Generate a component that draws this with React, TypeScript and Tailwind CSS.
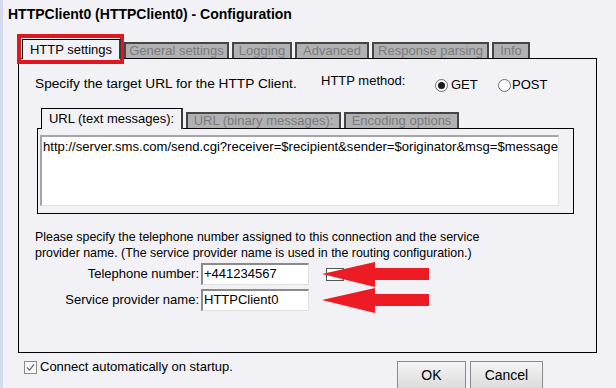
import React from "react";

const tabs = [
  { label: "General settings", w: "w-[105px]" },
  { label: "Logging", w: "w-[60px]" },
  { label: "Advanced", w: "w-[74px]" },
  { label: "Response parsing", w: "w-[117px]" },
  { label: "Info", w: "w-[38px]" },
];

function Radio({ checked }: { checked?: boolean }) {
  return (
    <span className="w-[13px] h-[13px] rounded-full border border-[#6f6f6f] bg-white flex items-center justify-center">
      {checked && <span className="w-[7px] h-[7px] rounded-full bg-[#1a1a1a]" />}
    </span>
  );
}

function Arrow({ top }: { top: string }) {
  return (
    <svg
      className={`absolute left-[316px] ${top}`}
      width="112"
      height="26"
      viewBox="0 0 112 26"
    >
      <polygon
        points="3,12 56,0 56,6 110,6 110,18 56,18 56,25"
        fill="#ec1b24"
      />
    </svg>
  );
}

export default function App() {
  return (
    <div className="relative w-[616px] h-[388px] overflow-hidden bg-[#f1f1f6] border-l-[3px] border-[#d3dbec] font-['Liberation_Sans',Arial,sans-serif] text-[13px] leading-[16px] text-black">
      <div className="pl-[5px] pt-[5px] h-[23px] text-[14px] leading-[18px] font-bold">
        HTTPClient0 (HTTPClient0) - Configuration
      </div>

      {/* tab strip */}
      <div className="ml-[15px] mt-[16px] pl-[4px] flex items-end gap-[3px] h-[19px]">
        <div className="relative z-10 -mb-px h-[20px] w-[99px] bg-[#f1f1f6] border-t border-l border-black border-r-2 border-r-[#3a3a3a] flex items-center justify-center">
          HTTP settings
        </div>
        {tabs.map((t) => (
          <div
            key={t.label}
            className={`${t.w} h-[16px] bg-[#b1b1b3] border-t-2 border-l-2 border-r-2 border-[#454545] text-[#7b7b7b] flex items-center justify-center leading-[14px]`}
          >
            {t.label}
          </div>
        ))}
      </div>

      {/* main panel */}
      <div className="ml-[15px] w-[579px] h-[295px] border border-black">
        <div className="flex mt-[14px] h-[20px]">
          <div className="pl-[16px] w-[302px] pt-[3px] text-[13.7px]">
            Specify the target URL for the HTTP Client.
          </div>
          <div className="w-[114px]">HTTP method:</div>
          <div className="flex items-center gap-[3px] pt-[4px] h-[20px] w-[63px]">
            <Radio checked />
            <span>GET</span>
          </div>
          <div className="flex items-center gap-[1px] pt-[4px] h-[20px]">
            <Radio />
            <span>POST</span>
          </div>
        </div>

        {/* inner tabs */}
        <div className="mt-[15px] ml-[22px] flex items-end gap-[3px] h-[20px]">
          <div className="relative z-10 -mb-px h-[21px] w-[142px] bg-[#f1f1f6] border-t border-l border-black border-r-2 border-r-[#3a3a3a] flex items-center justify-center">
            URL (text messages):
          </div>
          <div className="w-[155px] h-[16px] bg-[#b1b1b3] border-t-2 border-l-2 border-r-2 border-[#454545] text-[#7b7b7b] flex items-center justify-center leading-[14px]">
            URL (binary messages):
          </div>
          <div className="w-[115px] h-[16px] bg-[#b1b1b3] border-t-2 border-l-2 border-r-2 border-[#454545] text-[#7b7b7b] flex items-center justify-center leading-[14px]">
            Encoding options
          </div>
        </div>
        <div className="ml-[18px] w-[537px] h-[86px] border border-black pl-[2px] pt-[6px]">
          <div className="w-[519px] h-[71px] bg-white border-t-2 border-l-2 border-[#a5a5a5] border-r border-b border-r-[#e2e2e2] border-b-[#e2e2e2] pl-[1px] pt-[2px] overflow-hidden whitespace-nowrap text-[13.1px]">
            http://server.sms.com/send.cgi?receiver=$recipient&amp;sender=$originator&amp;msg=$message
          </div>
        </div>

        <div className="mt-[15px] pl-[16px] leading-[16px] text-[12.4px]">
          Please specify the telephone number assigned to this connection and the service
          <br />
          provider name. (The service provider name is used in the routing configuration.)
        </div>

        <div className="mt-[2px] flex flex-col gap-[4px]">
          <div className="flex items-center">
            <span className="w-[182px] text-right pr-[2px]">Telephone number:</span>
            <div className="w-[108px] h-[22px] bg-white border-t-2 border-l-2 border-[#8a8a8a] border-r border-b border-r-[#e0e0e0] border-b-[#e0e0e0] pl-[1px] leading-[18px]">
              +441234567
            </div>
            <span className="ml-[17px] w-[18px] h-[13px] border border-[#555] bg-white" />
          </div>
          <div className="flex items-center">
            <span className="w-[182px] text-right pr-[2px]">Service provider name:</span>
            <div className="w-[108px] h-[22px] bg-white border-t-2 border-l-2 border-[#8a8a8a] border-r border-b border-r-[#e0e0e0] border-b-[#e0e0e0] pl-[1px] leading-[18px]">
              HTTPClient0
            </div>
          </div>
        </div>
      </div>

      {/* footer */}
      <div className="flex items-start mt-[8px]">
        <div className="flex items-center gap-[3px] ml-[21px] -mt-[2px]">
          <span className="w-[13px] h-[13px] border border-[#8c8c8c] bg-[#f7f7f9] flex items-center justify-center">
            <svg width="11" height="11" viewBox="0 0 11 11">
              <path d="M2 5.5 L4.5 8 L9 2.5" fill="none" stroke="#707070" strokeWidth="1.2" />
            </svg>
          </span>
          <span>Connect automatically on startup.</span>
        </div>
        <div className="ml-[164px] flex gap-[4px]">
          <button className="w-[69px] h-[28px] border border-[#8a8a8a] bg-gradient-to-b from-[#f4f4f4] to-[#dcdcdc] text-[14px]">
            OK
          </button>
          <button className="w-[73px] h-[28px] border border-[#8a8a8a] bg-gradient-to-b from-[#f4f4f4] to-[#dcdcdc] text-[14px]">
            Cancel
          </button>
        </div>
      </div>

      {/* annotations */}
      <div className="absolute left-[14px] top-[34px] w-[107px] h-[30px] border-4 border-[#e2161f]" />
      <Arrow top="top-[262px]" />
      <Arrow top="top-[288px]" />
    </div>
  );
}
